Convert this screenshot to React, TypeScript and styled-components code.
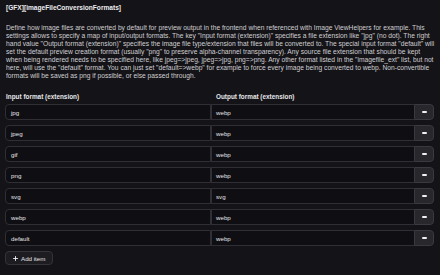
import React from "react";
import styled, { createGlobalStyle } from "styled-components";

const Global = createGlobalStyle`
  html, body { margin: 0; padding: 0; background: #141317; }
  body { font-family: "Liberation Sans", Arial, sans-serif; color: #d9d9dc; }
`;

const Page = styled.div`
  width: 440px;
  height: 275px;
  box-sizing: border-box;
  padding: 3px 6px 0 5px;
  overflow: hidden;
`;

const Title = styled.h2`
  margin: 0 0 0 1px;
  font-size: 6.6px;
  line-height: 10px;
  font-weight: bold;
  color: #ececef;
`;

const Description = styled.p`
  margin: 11px -2px 0 1px;
  font-size: 6.7px;
  line-height: 8px;
  color: #cfcfd3;
`;

const HeaderRow = styled.div`
  display: grid;
  grid-template-columns: 206px 1fr 20px;
  margin-top: 11px;
  height: 10px;
  align-items: center;
`;

const HeaderCell = styled.div<{ $pad: number }>`
  font-size: 6.4px;
  font-weight: bold;
  color: #e6e6e9;
  padding-left: ${(p) => p.$pad}px;
`;

const Rows = styled.div`
  display: flex;
  flex-direction: column;
  gap: 5px;
  margin-top: 3px;
`;

const Group = styled.div`
  display: grid;
  grid-template-columns: 206px 1fr 20px;
  height: 16px;
`;

const Field = styled.div<{ $first?: boolean }>`
  box-sizing: border-box;
  height: 16px;
  background: #0f0e12;
  border: 1px solid #302f35;
  border-right: ${(p) => (p.$first ? "1px solid #302f35" : "none")};
  border-radius: ${(p) => (p.$first ? "4px 0 0 4px" : "0")};
  display: flex;
  align-items: center;
  padding-left: ${(p) => (p.$first ? 5 : 4)}px;
  font-size: 6.2px;
  color: #e4e4e7;
`;

const RemoveButton = styled.button`
  box-sizing: border-box;
  height: 16px;
  width: 20px;
  padding: 0;
  margin: 0;
  background: #28272c;
  border: 1px solid #3a393f;
  border-radius: 0 4px 4px 0;
  display: flex;
  align-items: center;
  justify-content: center;
  &::before {
    content: "";
    width: 5px;
    height: 1.4px;
    background: #f0f0f2;
    border-radius: 1px;
  }
`;

const AddButton = styled.button`
  margin-top: 5px;
  box-sizing: border-box;
  height: 14px;
  width: 48px;
  padding: 0 0 0 7px;
  display: flex;
  align-items: center;
  gap: 3px;
  background: #1d1c21;
  border: 1px solid #34333a;
  border-radius: 4px;
  font-family: "Liberation Sans", Arial, sans-serif;
  font-size: 6.2px;
  color: #e4e4e7;
`;

const Plus = styled.svg`
  width: 5px;
  height: 5px;
`;

const items: [string, string][] = [
  ["jpg", "webp"],
  ["jpeg", "webp"],
  ["gif", "webp"],
  ["png", "webp"],
  ["svg", "svg"],
  ["webp", "webp"],
  ["default", "webp"],
];

export default function App() {
  return (
    <Page>
      <Global />
      <Title>[GFX][imageFileConversionFormats]</Title>
      <Description>
        Define how image files are converted by default for preview output in the frontend when referenced with Image ViewHelpers for example. This settings allows to specify a map of input/output formats. The key "Input format (extension)" specifies a file extension like "jpg" (no dot). The right hand value "Output format (extension)" specifies the image file type/extension that files will be converted to. The special input format "default" will set the default preview creation format (usually "png" to preserve alpha-channel transparency). Any source file extension that should be kept when being rendered needs to be specified here, like jpeg=&gt;jpeg, jpeg=&gt;jpg, png=&gt;png. Any other format listed in the "imagefile_ext" list, but not here, will use the "default" format. You can just set "default=&gt;webp" for example to force every image being converted to webp. Non-convertible formats will be saved as png if possible, or else passed through.
      </Description>
      <HeaderRow>
        <HeaderCell $pad={1}>Input format (extension)</HeaderCell>
        <HeaderCell $pad={5}>Output format (extension)</HeaderCell>
      </HeaderRow>
      <Rows>
        {items.map(([input, output]) => (
          <Group key={input}>
            <Field $first>{input}</Field>
            <Field>{output}</Field>
            <RemoveButton aria-label="Remove" />
          </Group>
        ))}
      </Rows>
      <AddButton>
        <Plus viewBox="0 0 10 10">
          <path d="M5 1v8M1 5h8" stroke="#f0f0f2" strokeWidth="1.8" strokeLinecap="round" />
        </Plus>
        Add item
      </AddButton>
    </Page>
  );
}
